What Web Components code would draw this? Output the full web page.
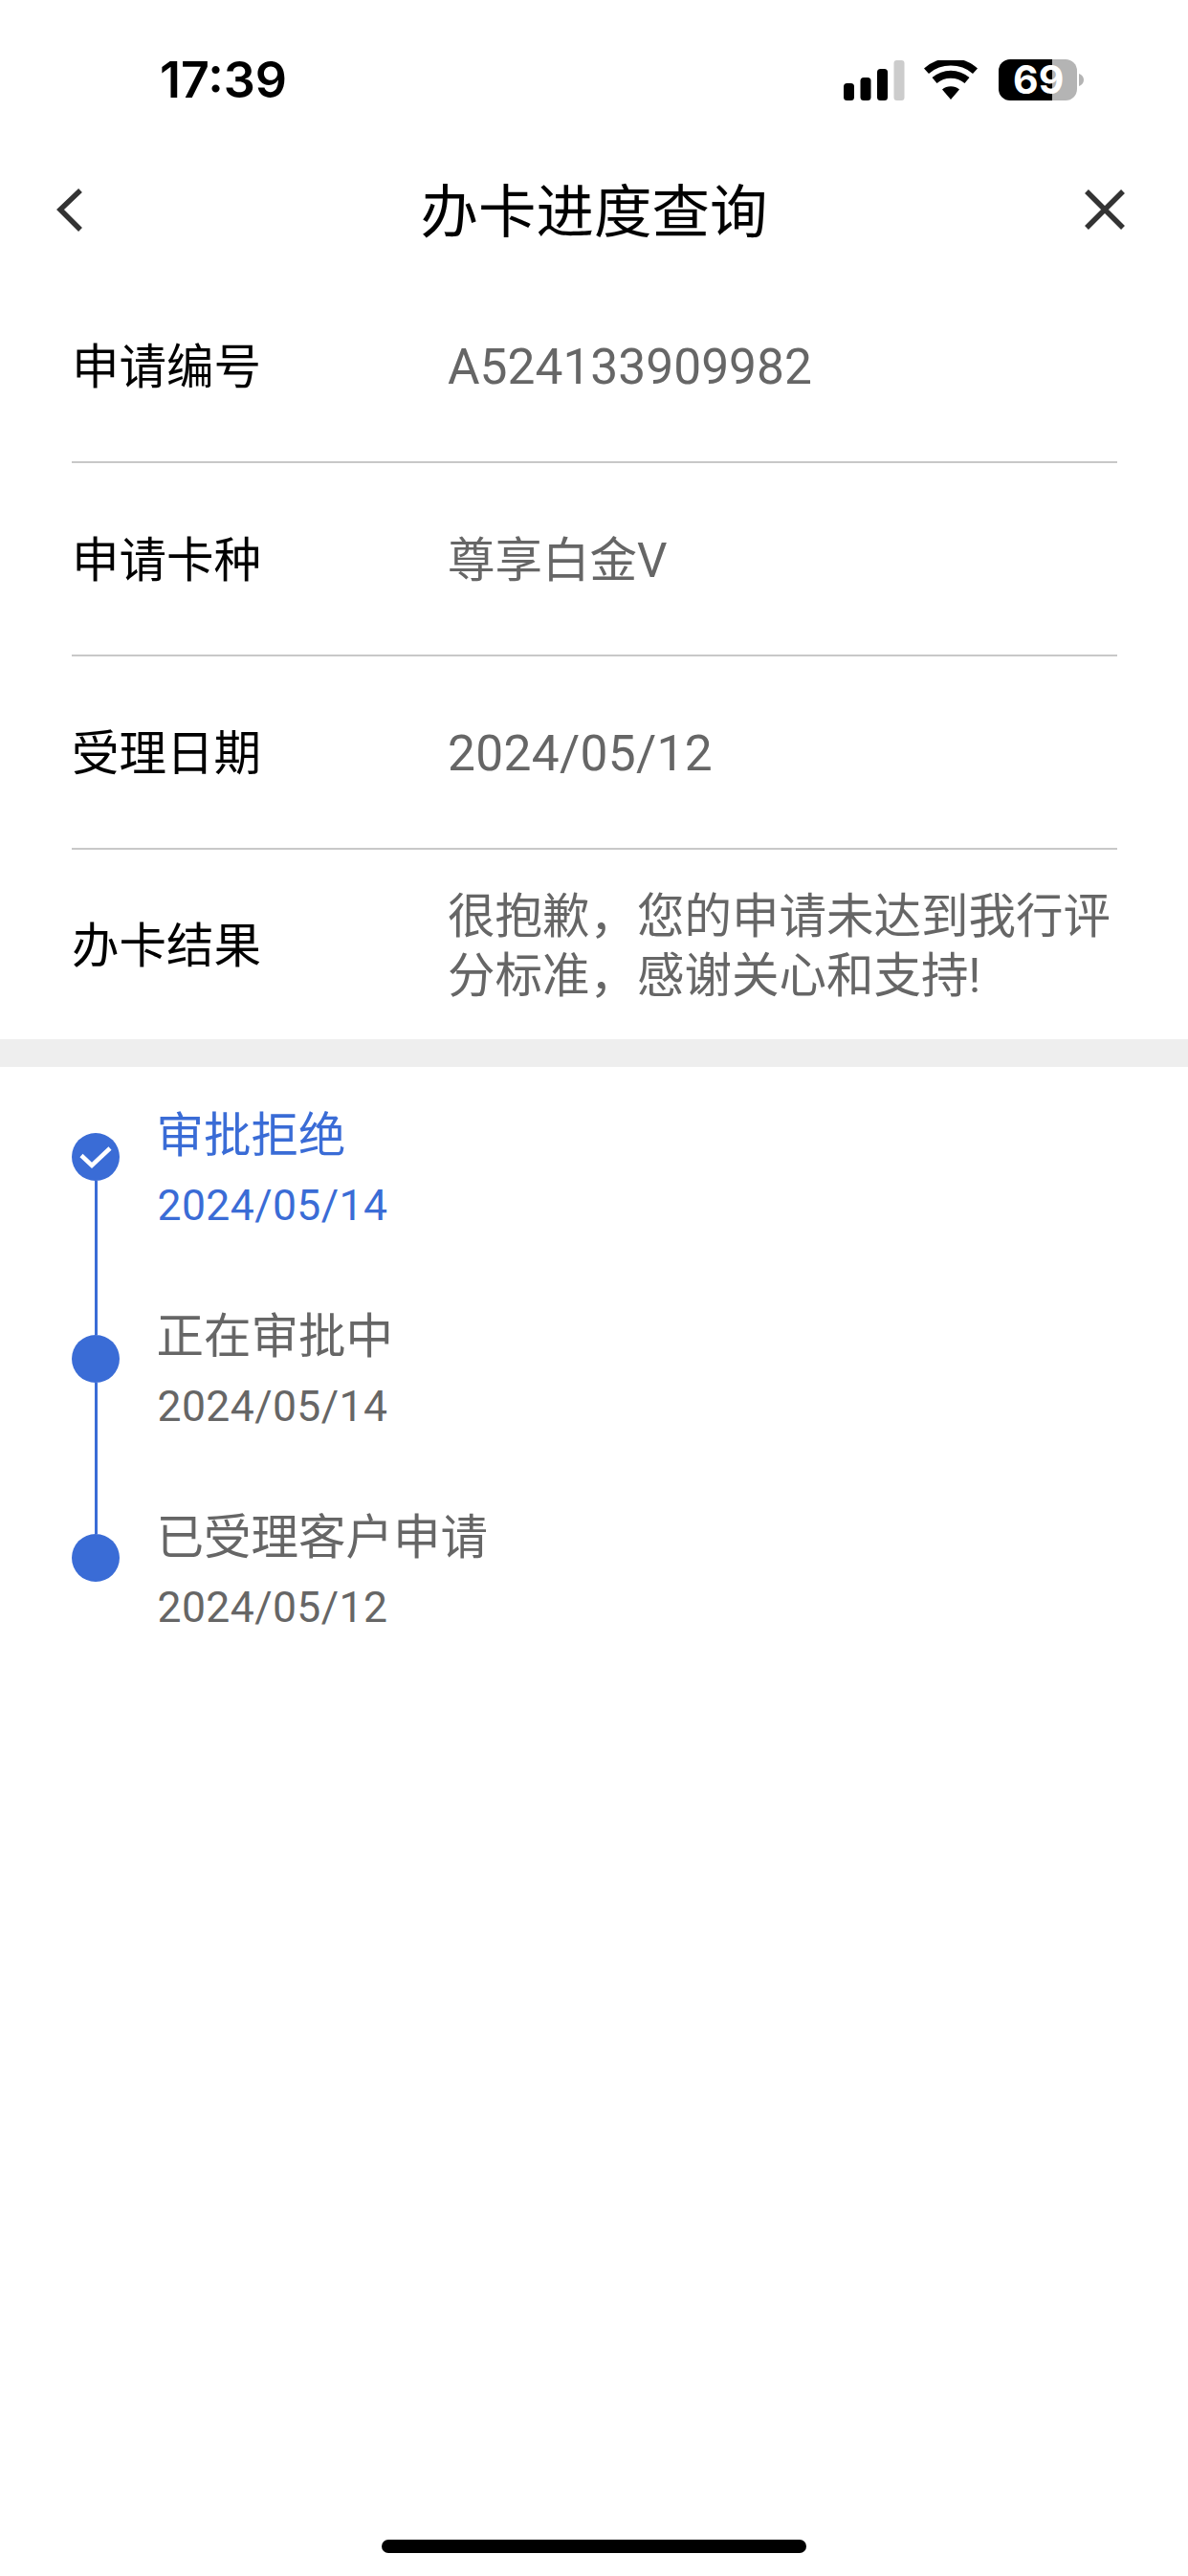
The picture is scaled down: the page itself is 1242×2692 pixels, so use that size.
<!DOCTYPE html>
<html lang="zh-CN">
<head>
<meta charset="utf-8">
<title>办卡进度查询</title>
<style>
html,body{margin:0;padding:0;background:#fff;}
body{width:1242px;height:2692px;overflow:hidden;font-family:Roboto,"Noto Sans CJK SC",sans-serif;color:#000;}
</style>
</head>
<body>
<app-page>
  <status-bar time="17:39" level="69"></status-bar>
  <nav-bar>办卡进度查询</nav-bar>
  <info-list>
    <info-row label="申请编号" num>A524133909982</info-row>
    <info-row label="申请卡种">尊享白金V</info-row>
    <info-row label="受理日期" num date>2024/05/12</info-row>
    <info-row label="办卡结果" last>很抱歉，您的申请未达到我行评分标准，感谢关心和支持!</info-row>
  </info-list>
  <section-band></section-band>
  <progress-list>
    <progress-step title="审批拒绝" date="2024/05/14" state="current" offset="28"></progress-step>
    <progress-step title="正在审批中" date="2024/05/14" offset="29"></progress-step>
    <progress-step title="已受理客户申请" date="2024/05/12" offset="27" last></progress-step>
  </progress-list>
  <home-indicator></home-indicator>
</app-page>
<script>
function def(name, css, html){
  customElements.define(name, class extends HTMLElement{
    connectedCallback(){
      if(this.shadowRoot) return;
      const r=this.attachShadow({mode:'open'});
      r.innerHTML='<style>'+css+'</style>'+(typeof html==='function'?html(this):html);
    }
  });
}
def('app-page',':host{display:flex;flex-direction:column;width:1242px;height:2692px;background:#fff;}','<slot></slot>');

def('status-bar',`
:host{display:flex;height:166px;box-sizing:border-box;padding:62px 109px 0 167px;justify-content:space-between;align-items:flex-start;}
.t{font:600 52px/44px Inter,sans-serif;color:#000;}
.r{display:flex;align-items:flex-start;}
.bat{position:relative;width:89px;height:43px;margin-left:22px;}
.bat span{position:absolute;left:15px;top:0;width:52px;height:43px;font:700 41px/43px Inter,sans-serif;color:#fff;text-align:center;}
svg{display:block}
`,h=>`<div class="t">${h.getAttribute('time')}</div>
<div class="r">
<svg width="64" height="42" viewBox="0 0 64 42" style="margin-top:1px"><rect x="0" y="24" width="11" height="18" rx="3.5"/><rect x="17.5" y="18" width="11" height="24" rx="3.5"/><rect x="35" y="9" width="11" height="33" rx="3.5"/><rect x="52.5" y="0" width="11" height="42" rx="3" fill="#ccc"/></svg>
<svg width="56" height="41" viewBox="0 0 56 41" style="margin:1px 0 0 20.5px"><path d="M28 41 L19 30.5 A14 14 0 0 1 37 30.5 Z"/><path d="M13.5 24 L8.5 18 A30 30 0 0 1 47.5 18 L42.5 24 A22.5 22.5 0 0 0 13.5 24 Z"/><path d="M5 14 L0 8.5 A42 42 0 0 1 56 8.5 L51 14 A35 35 0 0 0 5 14 Z"/></svg>
<div class="bat"><svg width="89" height="43" viewBox="0 0 89 43"><path d="M12 0H56V43H12A12 12 0 0 1 0 31V12A12 12 0 0 1 12 0Z"/><path d="M56 0H70A12 12 0 0 1 82 12V31A12 12 0 0 1 70 43H56Z" fill="#b4b4b4"/><path d="M84 15C87 16 89 18.500 89 21.500C89 24.500 87 27 84 28Z" fill="#b4b4b4"/></svg><span>${h.getAttribute('level')}</span></div>
</div>`);

def('nav-bar',`
:host{display:grid;grid-template-columns:1fr auto 1fr;height:106px;box-sizing:border-box;padding:0 65px;align-items:center;}
.t{font:400 60.5px/80px "Noto Sans CJK SC",sans-serif;color:#000;padding-bottom:5px;}
svg{display:block;fill:none;stroke:#333;stroke-width:5.500;}
svg.b{margin-left:-7px;}
svg.x{justify-self:end;}
`,`<svg class="b" width="30" height="46" viewBox="0 0 30 46"><path d="M26 3 L5 23 L26 44"/></svg>
<div class="t"><slot></slot></div>
<svg class="x" width="44" height="44" viewBox="0 0 44 44"><path d="M3 3 L41 41 M41 3 L3 41"/></svg>`);

def('info-list',':host{display:block;padding:10px 74px 0 75px;}','<slot></slot>');

def('info-row',`
:host{display:grid;grid-template-columns:393px 1fr;align-items:center;box-sizing:border-box;height:202px;border-bottom:2px solid #c8c8c8;padding-top:4px;}
:host([last]){border-bottom:0;height:198px;padding-top:4px;}
.l,.v{font:400 49.5px/62px Roboto,"Noto Sans CJK SC",sans-serif;}
.l{color:#000;}
.v{color:#666;}
:host([num]) .v{font-size:51.5px;}
:host([date]) .v{letter-spacing:.3px;}
`,h=>`<div class="l">${h.getAttribute('label')}</div><div class="v"><slot></slot></div>`);

def('section-band',':host{display:block;height:29px;background:#eee;}','');

def('progress-list',':host{display:block;padding:41px 0 0 75px;}','<slot></slot>');

def('progress-step',`
:host{display:grid;grid-template-columns:50px 1fr;column-gap:38.5px;height:210px;color:#666;}
:host([state=current]){color:#3a6cd6;}
.m{display:flex;flex-direction:column;align-items:center;}
.seg{width:3px;background:#3a6cd6;}
.top{height:var(--o);}
:host([state=current]) .top{background:transparent;}
.bot{flex:1;}
:host([last]) .bot{background:transparent;}
.dot{width:50px;height:50px;border-radius:50%;background:#3a6cd6;flex:none;}
.dot svg{display:block;}
.title{font:400 49.5px/62px Roboto,"Noto Sans CJK SC",sans-serif;}
.date{font:400 44.5px/56px Roboto,"Noto Sans CJK SC",sans-serif;margin:14px 0 0 1px;letter-spacing:.4px;}
`,h=>`<div class="m" style="--o:${h.getAttribute('offset')}px"><div class="seg top"></div><div class="dot">${h.getAttribute('state')==='current'?'<svg width="50" height="50" viewBox="0 0 50 50"><path d="M10 23.500 L21 34 L40 16" fill="none" stroke="#fff" stroke-width="4.500"/></svg>':''}</div><div class="seg bot"></div></div>
<div><div class="title">${h.getAttribute('title')}</div><div class="date">${h.getAttribute('date')}</div></div>`);

def('home-indicator',':host{display:block;width:444px;height:14px;border-radius:7px;background:#000;margin:auto auto 24px;}','');
</script>
</body>
</html>
